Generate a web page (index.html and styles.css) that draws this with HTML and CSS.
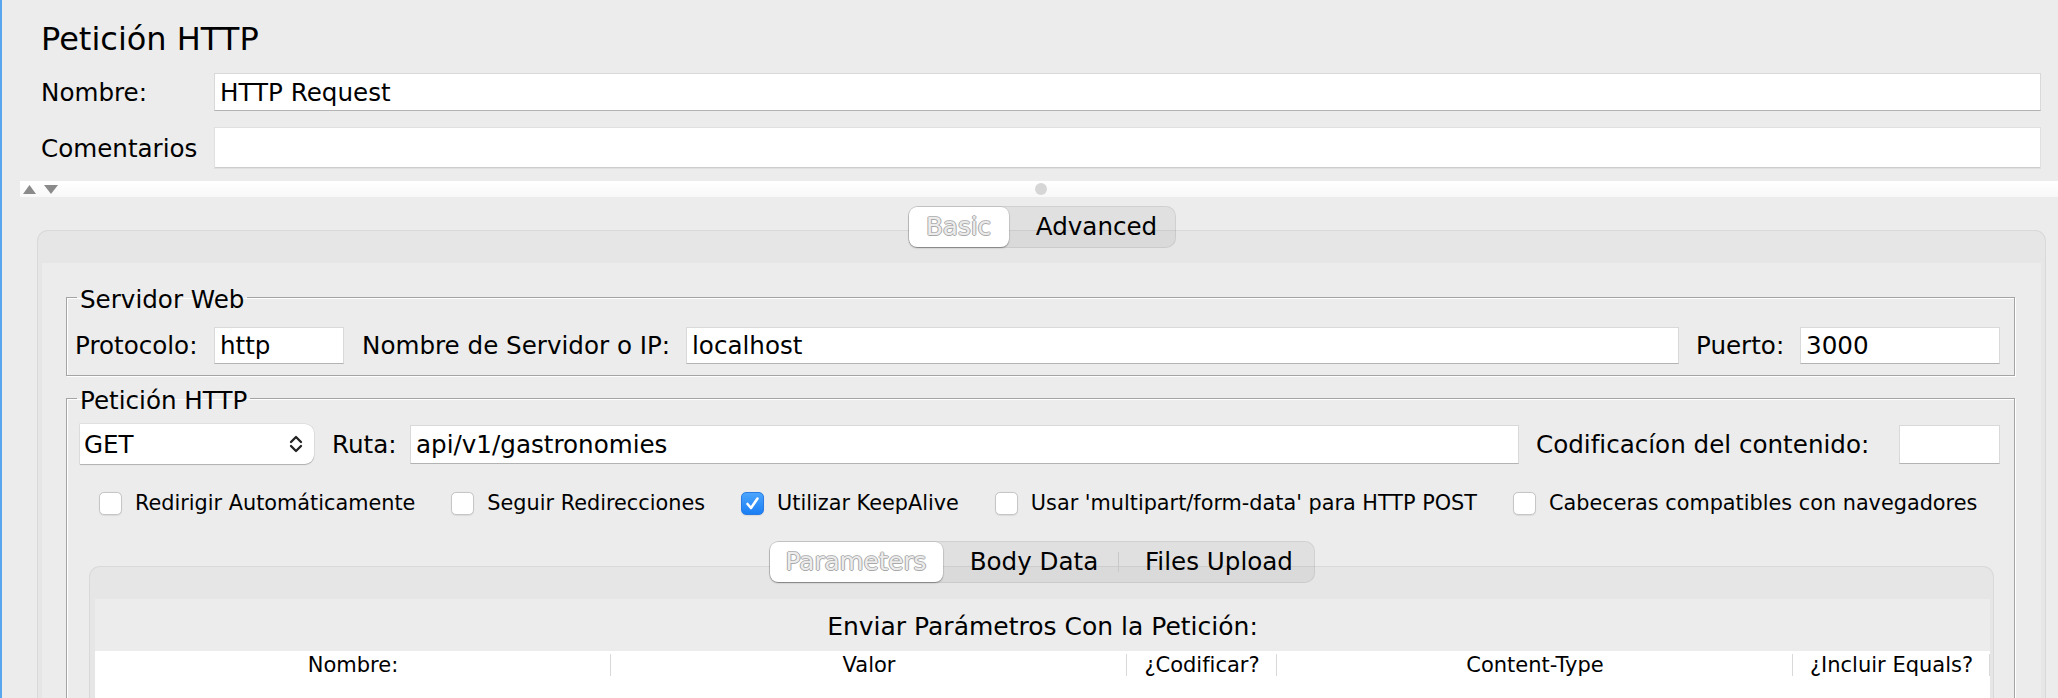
FILE: index.html
```html
<!DOCTYPE html>
<html lang="es">
<head>
<meta charset="utf-8">
<title>Petición HTTP</title>
<link rel="stylesheet" href="styles.css">
</head>
<body>
<div class="app">
  <header class="head">
    <h1 class="title">Petición HTTP</h1>
    <div class="name-row">
      <span class="name-label">Nombre:</span>
      <div class="field name-field">HTTP Request</div>
    </div>
    <div class="name-row comments">
      <span class="name-label">Comentarios</span>
      <div class="field area-field"></div>
    </div>
  </header>

  <div class="splitter">
    <div class="arrows">
      <svg class="arrow" width="13" height="9" viewBox="0 0 13 9"><polygon points="0,9 6.5,0 13,9" fill="#8a8a8a"/></svg>
      <svg class="arrow" width="14" height="9" viewBox="0 0 14 9"><polygon points="0,0 14,0 7,9" fill="#8a8a8a"/></svg>
    </div>
    <div class="grip"></div>
    <div></div>
  </div>

  <div class="tabs-wrap outer">
    <div class="seg">
      <span class="seg-item sel w-basic">Basic</span>
      <span class="seg-item w-adv">Advanced</span>
    </div>
    <div class="pane outer-pane">
      <div class="pane-body">
        <fieldset class="group server">
          <legend>Servidor Web</legend>
          <div class="row server-row">
            <span class="lbl l-proto">Protocolo:</span>
            <div class="field f-proto">http</div>
            <span class="lbl l-host">Nombre de Servidor o IP:</span>
            <div class="field f-grow">localhost</div>
            <span class="lbl l-port">Puerto:</span>
            <div class="field f-port">3000</div>
          </div>
        </fieldset>

        <fieldset class="group request">
          <legend>Petición HTTP</legend>
          <div class="row request-row">
            <div class="combo">
              <span class="combo-text">GET</span>
              <span class="combo-btn">
                <svg width="14" height="20" viewBox="0 0 14 20"><polyline points="2,8 7,3 12,8" fill="none" stroke="#222" stroke-width="2.3" stroke-linecap="round" stroke-linejoin="round"/><polyline points="2,12 7,17 12,12" fill="none" stroke="#222" stroke-width="2.3" stroke-linecap="round" stroke-linejoin="round"/></svg>
              </span>
            </div>
            <span class="lbl l-ruta">Ruta:</span>
            <div class="field f-grow f-tall">api/v1/gastronomies</div>
            <span class="lbl l-enc">Codificacíon del contenido:</span>
            <div class="field f-enc f-tall"></div>
          </div>

          <div class="checks">
            <label class="check"><span class="box"></span>Redirigir Automáticamente</label>
            <label class="check"><span class="box"></span>Seguir Redirecciones</label>
            <label class="check"><span class="box on"><svg width="21" height="21" viewBox="0 0 21 21"><polyline points="5.5,11 9,15 15.5,5.5" fill="none" stroke="#fff" stroke-width="2.6" stroke-linecap="round" stroke-linejoin="round"/></svg></span>Utilizar KeepAlive</label>
            <label class="check"><span class="box"></span>Usar 'multipart/form-data' para HTTP POST</label>
            <label class="check"><span class="box"></span>Cabeceras compatibles con navegadores</label>
          </div>

          <div class="tabs-wrap inner">
            <div class="seg inner-seg">
              <span class="seg-item sel w-par">Parameters</span>
              <span class="seg-item w-body">Body Data</span>
              <span class="seg-sep"></span>
              <span class="seg-item w-files">Files Upload</span>
            </div>
            <div class="pane inner-pane">
              <div class="pane-body">
                <div class="param-title">Enviar Parámetros Con la Petición:</div>
                <div class="table">
                  <div class="thead">
                    <span class="th">Nombre:</span>
                    <span class="th">Valor</span>
                    <span class="th">¿Codificar?</span>
                    <span class="th">Content-Type</span>
                    <span class="th">¿Incluir Equals?</span>
                  </div>
                </div>
              </div>
            </div>
          </div>
        </fieldset>
      </div>
    </div>
  </div>
</div>
</body>
</html>
```

FILE: styles.css
```css
* { box-sizing: border-box; }

html, body {
  margin: 0;
  padding: 0;
  background: #ececec;
}

body {
  font-family: "DejaVu Sans", "Liberation Sans", sans-serif;
  color: #000;
}

.app {
  height: 698px;
  overflow: hidden;
  border-left: 2px solid #58a6ee;
  background: #ececec;
  font-size: 24.6px;
}

/* ---------- header ---------- */
.head {
  padding: 20px 17px 0 39px;
}

.title {
  margin: 0;
  font-size: 32px;
  font-weight: normal;
  line-height: 38px;
}

.name-row {
  display: flex;
  align-items: center;
  margin-top: 15px;
}

.name-row.comments {
  margin-top: 16px;
}

.name-label {
  width: 173px;
  flex: none;
}

.field {
  background: #fff;
  border: 1px solid #d9d9d9;
  border-bottom-color: #b3b3b3;
  display: flex;
  align-items: center;
  padding: 0 5px;
  white-space: nowrap;
  height: 37px;
  flex: none;
}

.name-field {
  flex: 1;
  height: 38px;
}

.area-field {
  flex: 1;
  height: 42px;
  border-color: #e0e0e0;
  box-shadow: inset 0 -1px 0 #cdcdcd;
}

/* ---------- splitter ---------- */
.splitter {
  margin: 12px 0 0 18px;
  height: 16px;
  background: linear-gradient(#ffffff, #f8f8f8);
  display: grid;
  grid-template-columns: 1fr auto 1fr;
  align-items: center;
}

.arrows {
  display: flex;
  align-items: center;
  gap: 8px;
  padding-left: 3px;
}

.arrow { display: block; }

.grip {
  width: 12px;
  height: 12px;
  border-radius: 50%;
  background: #d6d6d6;
  margin-left: 4px;
}

/* ---------- tabs ---------- */
.tabs-wrap {
  display: flex;
  flex-direction: column;
}

.tabs-wrap.outer {
  margin: 9px 12px 0 35px;
}

.tabs-wrap.inner {
  margin: 23px 20px 0 22px;
}

.seg {
  align-self: center;
  display: flex;
  align-items: center;
  height: 42px;
  border-radius: 10px;
  background: rgba(0, 0, 0, 0.05);
  border: 1px solid rgba(0, 0, 0, 0.07);
  position: relative;
  z-index: 1;
  margin-bottom: -18px;
}

.inner-seg {
  margin-bottom: -17px;
}

.seg-item {
  height: 40px;
  line-height: 40px;
  text-align: center;
  white-space: nowrap;
}

.seg-item.sel {
  background: #fff;
  border-radius: 8px;
  box-shadow: 0 1px 1.5px rgba(0, 0, 0, 0.35), 0 0 0 0.5px rgba(0, 0, 0, 0.12);
  color: #ececec;
  text-shadow: 1px 0 0 #a8a8a8, -1px 0 0 #a8a8a8, 0 1px 0 #a8a8a8, 0 -1px 0 #b8b8b8;
}

.w-basic { width: 100px; }
.w-adv { width: 166px; padding-left: 10px; }
.w-par { width: 173px; }
.w-body { width: 175px; padding-left: 8px; }
.w-files { width: 195px; padding-left: 6px; }

.seg-sep {
  width: 1px;
  height: 20px;
  background: #c9c9c9;
}

.pane {
  background: #e6e6e6;
  border: 1px solid #d9d9d9;
  border-bottom: none;
  border-radius: 11px 11px 0 0;
}

.outer-pane {
  padding: 32px 4px 0 4px;
}

.inner-pane {
  padding: 32px 3px 0 5px;
}

.pane-body {
  display: flow-root;
  background: #ececec;
}

/* ---------- groups ---------- */
.group {
  margin: 0 26px 0 24px;
  padding: 0;
  min-width: 0;
  border: 1px solid #a4a4a4;
  box-shadow: inset 1px 1px 0 #fff, 1px 1px 0 #fff;
}

.group legend {
  margin-left: 10px;
  padding: 6px 3px 0;
  line-height: 30px;
}

.server {
  margin-top: 16px;
  padding: 12px 0 11px 0;
}

.request {
  margin-top: 4px;
  padding: 8px 0 0 0;
}

.row {
  display: flex;
  align-items: center;
}

.server-row {
  padding: 0 14px 0 8px;
}

.request-row {
  padding: 0 14px 0 13px;
}

.lbl {
  flex: none;
  white-space: nowrap;
}

.l-proto { width: 139px; }
.l-host { width: 324px; margin-left: 18px; }
.l-port { width: 104px; margin-left: 17px; }
.l-ruta { width: 78px; margin-left: 18px; }
.l-enc { width: 363px; margin-left: 17px; }

.f-proto { width: 130px; }
.f-grow { flex: 1; min-width: 0; }
.f-port { width: 200px; }
.f-enc { width: 101px; }
.f-tall { height: 39px; }

.combo {
  width: 234px;
  height: 40px;
  flex: none;
  display: flex;
  align-items: center;
  background: #fff;
  border-radius: 0 9px 9px 0;
  box-shadow: 0 1px 1px rgba(0, 0, 0, 0.22), 0 0 0 0.5px rgba(0, 0, 0, 0.1);
}

.combo-text {
  flex: 1;
  padding-left: 4px;
}

.combo-btn {
  width: 32px;
  display: flex;
  justify-content: center;
  align-items: center;
  padding-right: 4px;
}

.combo-btn svg { display: block; }

/* ---------- checkboxes ---------- */
.checks {
  display: flex;
  align-items: center;
  gap: 36px;
  height: 30px;
  margin-top: 24px;
  padding-left: 32px;
  font-size: 20.8px;
  white-space: nowrap;
}

.check {
  display: flex;
  align-items: center;
}

.box {
  width: 23px;
  height: 23px;
  margin-right: 13px;
  border-radius: 5px;
  background: #fff;
  border: 1px solid #c6c6c6;
  box-shadow: 0 0.5px 1px rgba(0, 0, 0, 0.08);
  display: flex;
  align-items: center;
  justify-content: center;
}

.box.on {
  background: linear-gradient(#4ca5fd, #1a7ef4);
  border-color: #2b7be6;
}

.box svg { display: block; }

/* ---------- parameters table ---------- */
.param-title {
  text-align: center;
  padding-top: 4px;
  line-height: 48px;
  font-size: 25px;
  white-space: nowrap;
}

.table {
  background: #fff;
  height: 200px;
}

.thead {
  display: grid;
  grid-template-columns: 516px 516px 150px 516px 1fr;
  height: 28px;
  font-size: 21px;
  line-height: 28px;
}

.th {
  text-align: center;
  white-space: nowrap;
  background: linear-gradient(#d9d9d9, #d9d9d9) right center / 1px 22px no-repeat;
}
```
